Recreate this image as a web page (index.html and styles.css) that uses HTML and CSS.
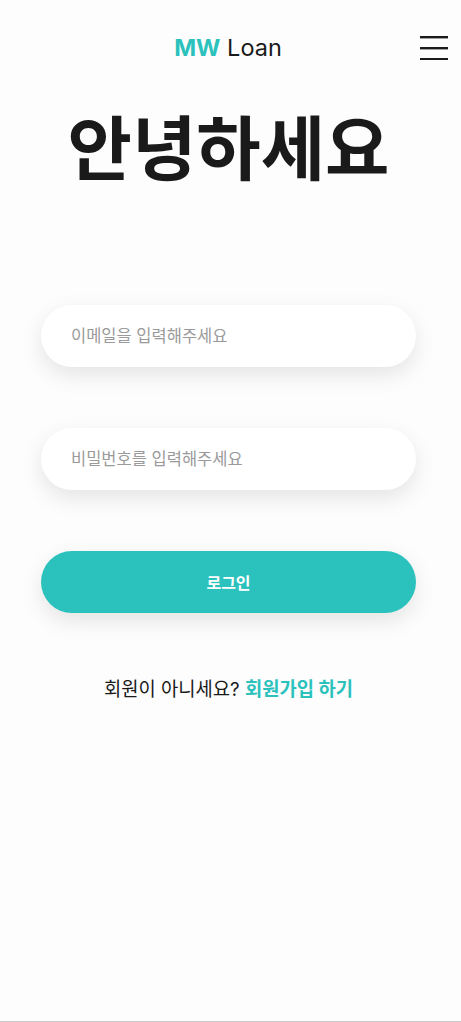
FILE: index.html
```html
<!DOCTYPE html>
<html lang="ko">
<head>
  <meta charset="UTF-8">
  <meta name="viewport" content="width=device-width, initial-scale=1.0">
  <title>MW Loan - 로그인</title>
  <link rel="stylesheet" href="styles.css">
</head>
<body>
  <header class="top-bar">
    <span></span>
    <div class="logo"><b>MW</b> Loan</div>
    <button class="menu-btn" aria-label="메뉴">
      <svg width="28" height="26" viewBox="0 0 28 26">
        <rect x="0" y="2" width="28" height="2.4" fill="#1a1a1a"/>
        <rect x="0" y="13" width="28" height="2.4" fill="#1a1a1a"/>
        <rect x="0" y="24" width="28" height="2.4" fill="#1a1a1a"/>
      </svg>
    </button>
  </header>

  <main class="login">
    <h1 class="greeting">안녕하세요</h1>

    <form class="login-form">
      <input class="field" type="email" placeholder="이메일을 입력해주세요">
      <input class="field" type="password" placeholder="비밀번호를 입력해주세요">
      <button class="submit-btn" type="button">로그인</button>
    </form>

    <p class="signup">회원이 아니세요? <a href="#">회원가입 하기</a></p>
  </main>
</body>
</html>
```

FILE: styles.css
```css
html, body {
  height: 100%;
}
body {
  margin: 0;
  background-color: #fdfdfd;
  font-family: Inter, "Noto Sans CJK KR", sans-serif;
  color: #1a1a1a;
  border-bottom: 1px solid #c8c8c8;
  box-sizing: border-box;
}
.top-bar {
  display: grid;
  grid-template-columns: 1fr auto 1fr;
  align-items: center;
  height: 94px;
  padding: 0 13px 0 0;
}
.logo {
  font-size: 23.5px;
  margin-left: 8px;
}
.logo b {
  color: #2bc1bc;
  font-weight: 700;
}
.menu-btn {
  justify-self: end;
  background: none;
  border: none;
  padding: 0;
  cursor: pointer;
  line-height: 0;
}
.login {
  padding: 0 45px 0 41px;
}
.greeting {
  margin: 14px 0 0;
  text-align: center;
  font-size: 70px;
  font-weight: 700;
  line-height: 84px;
}
.login-form {
  display: flex;
  flex-direction: column;
  gap: 61px;
  margin-top: 113px;
}
.field {
  height: 62px;
  border: none;
  border-radius: 31px;
  background: #fff;
  box-shadow: 0 8px 22px rgba(0, 0, 0, 0.1);
  padding: 0 30px;
  font-family: inherit;
  font-size: 16.5px;
  outline: none;
}
.field::placeholder {
  color: #9a9a9a;
}
.submit-btn {
  height: 62px;
  border: none;
  border-radius: 31px;
  background-color: #2bc1bc;
  color: #fff;
  font-family: inherit;
  font-size: 16px;
  font-weight: 700;
  box-shadow: 0 8px 22px rgba(0, 0, 0, 0.1);
  cursor: pointer;
}
.signup {
  margin: 61px 0 0;
  text-align: center;
  font-size: 18.75px;
}
.signup a {
  color: #2bc1bc;
  font-weight: 700;
  text-decoration: none;
}
```
